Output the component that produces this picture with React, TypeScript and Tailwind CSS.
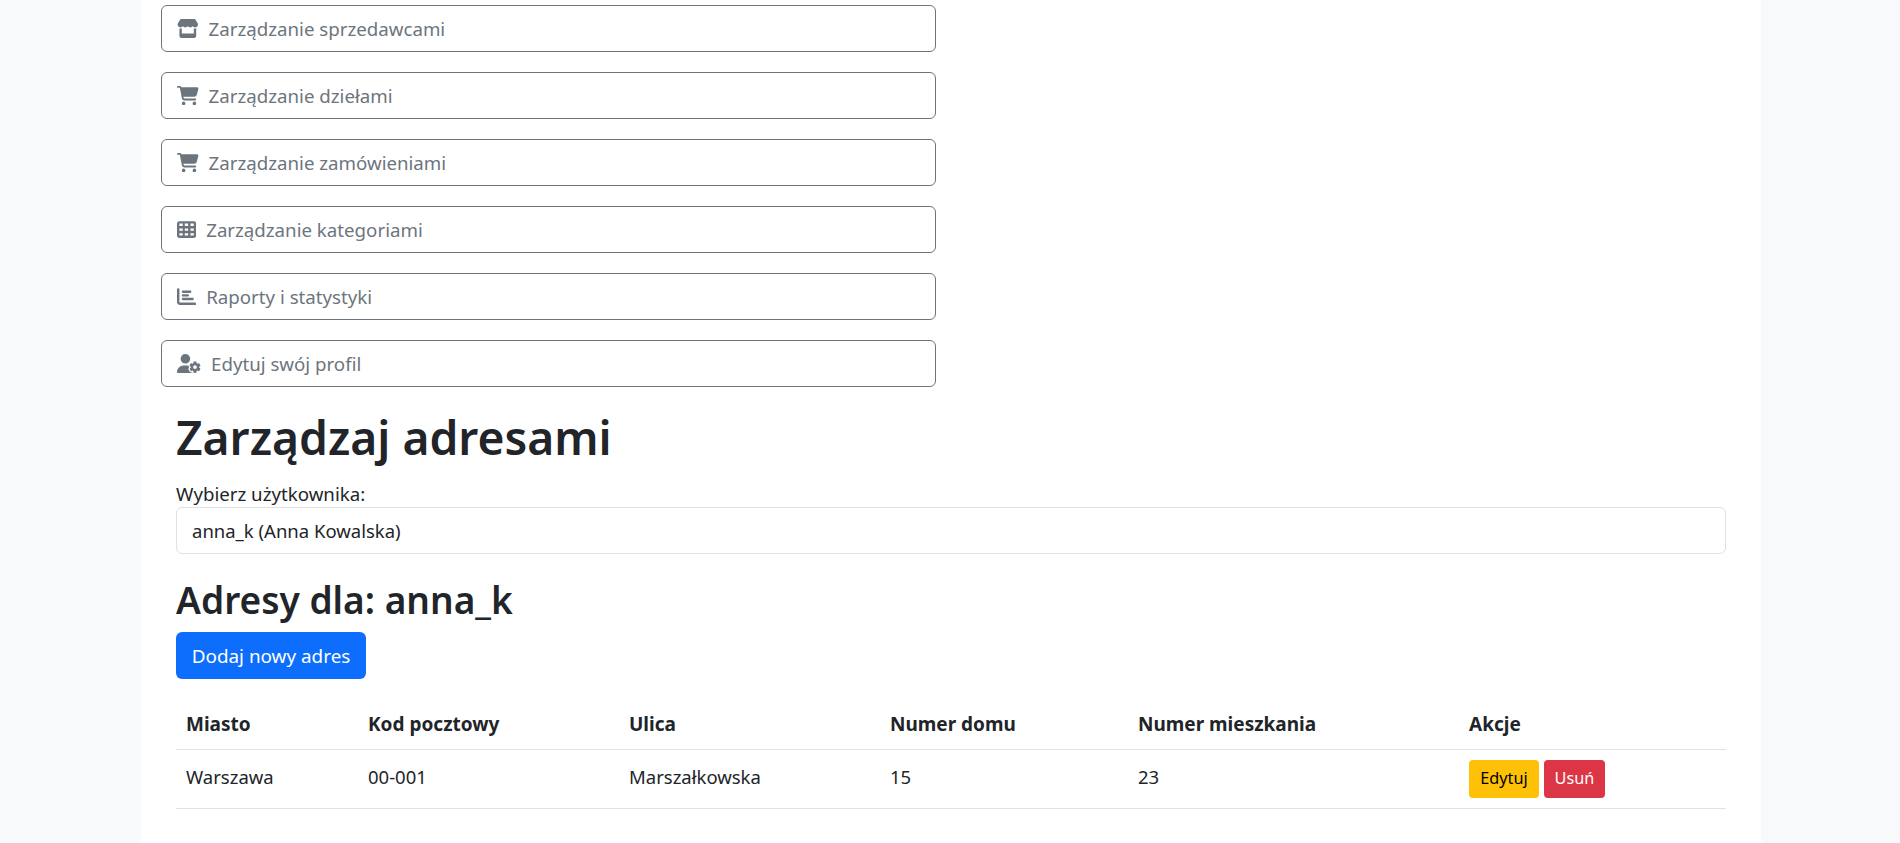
import { FaStore, FaCartShopping, FaTableCells, FaChartBar, FaUserGear } from 'react-icons/fa6';
import type { IconType } from 'react-icons';

const links: { label: string; icon: IconType; iconClass: string }[] = [
  { label: 'Zarządzanie sprzedawcami', icon: FaStore, iconClass: 'w-[21.6px]' },
  { label: 'Zarządzanie dziełami', icon: FaCartShopping, iconClass: 'w-[21.6px]' },
  { label: 'Zarządzanie zamówieniami', icon: FaCartShopping, iconClass: 'w-[21.6px]' },
  { label: 'Zarządzanie kategoriami', icon: FaTableCells, iconClass: 'w-[19.2px]' },
  { label: 'Raporty i statystyki', icon: FaChartBar, iconClass: 'w-[19.2px]' },
  { label: 'Edytuj swój profil', icon: FaUserGear, iconClass: 'w-[24px]' },
];

const headers = ['Miasto', 'Kod pocztowy', 'Ulica', 'Numer domu', 'Numer mieszkania', 'Akcje'];
const cells = ['Warszawa', '00-001', 'Marszałkowska', '15', '23'];
const widths = ['w-[182px]', 'w-[261px]', 'w-[261px]', 'w-[248px]', 'w-[331px]', ''];

export default function App() {
  return (
    <div className="h-[843px] overflow-hidden bg-[#f8f9fa] font-['Noto_Sans',sans-serif] text-[#212529]">
      <div className="ml-[141px] h-full w-[1620px] bg-white px-5 pt-[5px]">
        <div className="flex w-[775px] flex-col gap-[20px]">
          {links.map((l) => (
            <a key={l.label} className="flex h-[47px] items-center gap-[10px] rounded-[6px] border border-[#6c757d] px-[15px] text-[#6c757d]">
              <l.icon className={`h-[19.2px] shrink-0 ${l.iconClass}`} />
              <span className="pt-[2px] text-[18.7px]">{l.label}</span>
            </a>
          ))}
        </div>
        <div className="px-[15px]">
          <h1 className="mt-[22px] text-[46.2px] font-semibold leading-[58px]">Zarządzaj adresami</h1>
          <label className="mt-[13px] block text-[18.7px] leading-[27px]">Wybierz użytkownika:</label>
          <div className="flex h-[47px] items-center rounded-[6px] border border-[#dee2e6] px-[15px] pt-[1px] text-[18.5px]">anna_k (Anna Kowalska)</div>
          <h2 className="mt-[23px] text-[37.1px] font-semibold leading-[46px]">Adresy dla: anna_k</h2>
          <button className="mt-[9px] h-[47px] w-[190px] rounded-[6px] bg-[#0d6efd] pt-[1px] text-[18.9px] text-white">Dodaj nowy adres</button>
          <table className="mt-[21px] w-full border-collapse text-left text-[18.5px]">
            <thead>
              <tr className="border-b border-[#dee2e6]">
                {headers.map((h, i) => (
                  <th key={h} className={`h-[49px] px-[10px] text-[19px] font-bold ${widths[i]}`}>{h}</th>
                ))}
              </tr>
            </thead>
            <tbody>
              <tr className="border-b border-[#dee2e6]">
                {cells.map((c) => (
                  <td key={c} className="h-[59px] px-[10px] pb-[3px]">{c}</td>
                ))}
                <td className="px-[10px]">
                  <div className="flex gap-[5px]">
                    <button className="h-[38px] w-[70px] rounded-[4px] bg-[#ffc107] text-[16.3px] text-black">Edytuj</button>
                    <button className="h-[38px] w-[61px] rounded-[4px] bg-[#dc3545] text-[16.3px] text-white">Usuń</button>
                  </div>
                </td>
              </tr>
            </tbody>
          </table>
        </div>
      </div>
    </div>
  );
}
